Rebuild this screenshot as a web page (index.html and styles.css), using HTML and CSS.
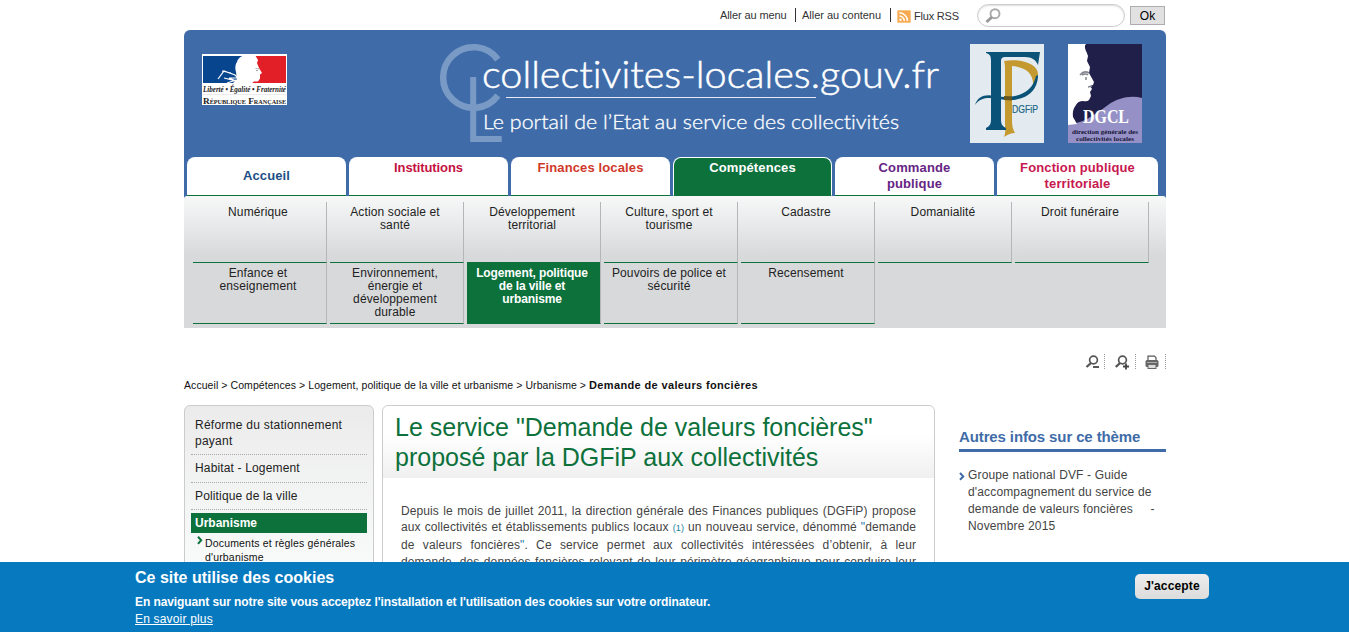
FILE: index.html
```html
<!DOCTYPE html>
<html lang="fr">
<head>
<meta charset="utf-8">
<title>Demande de valeurs foncières</title>
<link rel="stylesheet" href="styles.css">
</head>
<body>
<div class="page">
  <div class="topbar">
    <a class="top-link t1">Aller au menu</a>
    <a class="top-link t2">Aller au contenu</a>
    <a class="top-link t3"><svg class="rss" width="14" height="13" viewBox="0 0 14 13"><rect width="14" height="13" rx="2" fill="#f6a94e"/><rect x=".5" y=".5" width="13" height="12" rx="1.5" fill="none" stroke="#fbc689"/><circle cx="3.5" cy="9.8" r="1.2" fill="#fff"/><path d="M2.300 6a5 5 0 0 1 5 5M2.300 2.800a8.200 8.200 0 0 1 8.200 8.200" fill="none" stroke="#fff" stroke-width="1.500"/></svg>Flux RSS</a>
    <div class="search"><svg width="17" height="16" viewBox="0 0 17 16"><circle cx="10" cy="5.700" r="4.500" fill="#fff" stroke="#aaa" stroke-width="1.900"/><path d="M7 9l-5.500 5" stroke="#999" stroke-width="3"/></svg></div>
    <button class="ok">Ok</button>
  </div>

  <header class="header">
    <div class="banner">
      <svg class="marianne" width="85" height="51" viewBox="0 0 85 51">
        <rect width="85" height="51" fill="#fff"/>
        <rect x="1" y="2" width="40" height="27" fill="#07458f"/>
        <rect x="50" y="2" width="34" height="27" fill="#e21f26"/>
        <path d="M34 18c-1-3-1-7 1-10 1-4 5-7 10-7h8l3 5-1 3 2 5 3 5-2 1.500v4l-2 3h-4l-3 2.500H30l5-5z" fill="#fff"/>
        <path d="M16 25l6-8 11 4 3 3-9 0 7 3-12-3M20 17l9 2M25 29l9-3" fill="none" stroke="#fff" stroke-width="1.200"/>
        <path d="M53.500 14.500l4 .5M54 16.500h2" stroke="#999" stroke-width=".8"/>
        <text x="1" y="38" textLength="83" lengthAdjust="spacingAndGlyphs" class="motto">Liberté • Égalité • Fraternité</text>
        <path d="M1 40.500h83" stroke="#ddd" stroke-width=".6"/>
        <text x="1" y="49.500" textLength="83" lengthAdjust="spacingAndGlyphs" class="repub">République Française</text>
      </svg>
      <svg class="brand" width="506" height="104" viewBox="0 0 506 104">
        <path d="M59.800 17.500A30.300 30.300 0 1 0 59.800 53.500" fill="none" stroke="#7a9ac6" stroke-width="6.500"/>
        <path d="M35.200 35v62h28.500" fill="none" stroke="#7a9ac6" stroke-width="6"/>
        <text x="44" y="46" textLength="457" lengthAdjust="spacingAndGlyphs" class="brand-name">collectivites-locales.gouv.fr</text>
        <path d="M68 55.500h310" stroke="#e4ebf4" stroke-width="1"/>
        <text x="45" y="87" textLength="416" lengthAdjust="spacingAndGlyphs" class="brand-sub">Le portail de l’Etat au service des collectivités</text>
      </svg>
      <svg class="dgfip" width="74" height="99" viewBox="0 0 74 99">
        <rect width="74" height="99" fill="#e3ebf0"/>
        <path d="M34 17c16-3 34 3 34 13 0 5-2 9-5 12 1-12-7-19-21-20v55c0 5 1 9 3 12-4 0-8 2-11 4 2-5 1-9 1-14V26c0-4 0-6-1-9z" fill="#c49a30"/>
        <path d="M16 8h54l-2 13c-2-5-6-8-13-8H36c-4 0-5 1-5 5v57c0 5 1 7 5 9v2H16v-2c4-2 5-4 5-9V17c0-5-1-7-5-8z" fill="#0a5277"/>
        <path d="M5 61c3-9 10-11 20-9 18 3 37-1 41-20l2-1c0 18-15 26-31 25-13-1-24-6-32 5z" fill="#0a5277"/>
        <path d="M34 52l8 .5v4l-8-.5z" fill="#66551f"/>
        <text x="42" y="69" textLength="26" lengthAdjust="spacingAndGlyphs" class="dgfip-text">DGFiP</text>
      </svg>
      <svg class="dgcl" width="74" height="99" viewBox="0 0 74 99">
        <rect width="74" height="99" fill="#201f49"/>
        <path d="M0 80C14 80 25 72 40 61 50 54 62 51 74 54V99H0z" fill="#9590c5"/>
        <path d="M0 0h18c-3 3 1 8 2 12l-1 5 3 6-1 6 5 9-1 3-3 1 2 3-2 3 1 4-2 4q-2 2-6 1-5 0-7 4-4 5-3 12l4 7-9 1z" fill="#fff"/>
        <path d="M12 31q4-5 9-2M14 31q4-2 6 0M18 33l0 3M20 43l4-1" fill="none" stroke="#85858f" stroke-width="1.500"/>
        <text x="15" y="79" textLength="46" lengthAdjust="spacingAndGlyphs" class="dgcl-name">DGCL</text>
        <text x="4" y="90" textLength="66" lengthAdjust="spacingAndGlyphs" class="dgcl-sub">direction générale des</text>
        <text x="8" y="97" textLength="58" lengthAdjust="spacingAndGlyphs" class="dgcl-sub">collectivités locales</text>
      </svg>
    </div>
    <nav class="tabs">
      <a class="tab accueil">Accueil</a>
      <a class="tab institutions">Institutions</a>
      <a class="tab finances">Finances locales</a>
      <a class="tab active">Compétences</a>
      <a class="tab commande">Commande<br>publique</a>
      <a class="tab fonction">Fonction publique<br>territoriale</a>
    </nav>
    <nav class="submenu">
      <a class="cell">Numérique</a>
      <a class="cell">Action sociale et<br>santé</a>
      <a class="cell">Développement<br>territorial</a>
      <a class="cell">Culture, sport et<br>tourisme</a>
      <a class="cell">Cadastre</a>
      <a class="cell">Domanialité</a>
      <a class="cell">Droit funéraire</a>
      <a class="cell">Enfance et<br>enseignement</a>
      <a class="cell">Environnement,<br>énergie et<br>développement<br>durable</a>
      <a class="cell selected">Logement, politique<br>de la ville et<br>urbanisme</a>
      <a class="cell">Pouvoirs de police et<br>sécurité</a>
      <a class="cell">Recensement</a>
    </nav>
  </header>

  <div class="tools">
    <span class="tool"><svg width="15" height="15" viewBox="0 0 15 15"><circle cx="8.500" cy="6" r="3.900" fill="none" stroke="#555" stroke-width="1.700"/><path d="M6 9L1.500 13" stroke="#555" stroke-width="2.300"/><path d="M8 13h6" stroke="#444" stroke-width="1.800"/></svg></span>
    <span class="tool"><svg width="15" height="16" viewBox="0 0 15 16"><circle cx="7.500" cy="6" r="3.900" fill="none" stroke="#555" stroke-width="1.700"/><path d="M5 9L.8 13" stroke="#555" stroke-width="2.300"/><path d="M8 12.500h6M11 9.500v6" stroke="#444" stroke-width="1.800"/></svg></span>
    <span class="tool"><svg width="14" height="15" viewBox="0 0 14 15"><path d="M3 6V2.200h6.500L11 3.700V6" fill="#fff" stroke="#555" stroke-width="1.200"/><rect x=".5" y="6" width="13" height="7" rx="1.500" fill="#666"/><path d="M2 8.500h10" stroke="#aaa"/><rect x="3" y="10.500" width="8" height="4" fill="#ddd" stroke="#666"/></svg></span>
  </div>

  <div class="breadcrumb"><span>Accueil &gt; Compétences &gt; Logement, politique de la ville et urbanisme &gt; Urbanisme &gt; </span><b>Demande de valeurs foncières</b></div>

  <div class="columns">
    <aside class="side">
      <a class="side-item first">Réforme du stationnement<br>payant</a>
      <a class="side-item habitat">Habitat - Logement</a>
      <a class="side-item ville">Politique de la ville</a>
      <a class="side-active">Urbanisme</a>
      <a class="side-sub"><svg width="6" height="9" viewBox="0 0 6 9"><path d="M1 .8l3.200 3.400L1 7.800" fill="none" stroke="#0d713c" stroke-width="2"/></svg><span>Documents et règles générales<br>d'urbanisme</span></a>
    </aside>
    <main class="content">
      <h1>Le service "Demande de valeurs foncières"<br>proposé par la DGFiP aux collectivités</h1>
      <div class="text">
        <p class="line">Depuis le mois de juillet 2011, la direction générale des Finances publiques (DGFiP) propose</p>
        <p class="line">aux collectivités et établissements publics locaux <a class="note">(1)</a> un nouveau service, dénommé <span class="quote">"</span>demande</p>
        <p class="line third">de valeurs foncières<span class="quote">"</span>. Ce service permet aux collectivités intéressées d’obtenir, à leur</p>
        <p class="line">demande, des données foncières relevant de leur périmètre géographique pour conduire leur</p>
      </div>
    </main>
    <aside class="infos">
      <h2>Autres infos sur ce thème</h2>
      <div class="info-link"><svg width="6" height="9" viewBox="0 0 6 9"><path d="M1 1l3.200 3.400L1 7.800" fill="none" stroke="#3f6ca8" stroke-width="2"/></svg><span>Groupe national DVF - Guide<br>d'accompagnement du service de<br>demande de valeurs foncières &nbsp; &nbsp; -<br>Novembre 2015</span></div>
    </aside>
  </div>
</div>

<div class="cookies">
  <div class="cookie-text">
    <h3>Ce site utilise des cookies</h3>
    <p>En naviguant sur notre site vous acceptez l'installation et l'utilisation des cookies sur votre ordinateur.</p>
    <a>En savoir plus</a>
  </div>
  <button class="accept">J'accepte</button>
</div>
</body>
</html>
```
FILE: styles.css
```css
* { box-sizing: border-box; }
body {
  margin: 0;
  height: 632px;
  overflow: hidden;
  background: #fff;
  color: #222;
  font-family: "Liberation Sans", Arial, sans-serif;
  font-size: 12px;
}
h1, h2, h3, p { margin: 0; }
svg { display: block; flex: none; }
.page { width: 982px; margin-left: 184px; white-space: nowrap; }

/* top links and search */
.topbar { display: flex; height: 30px; padding-left: 536px; font-size: 11px; color: #333; }
.top-link { display: flex; height: 14px; margin-top: 8px; line-height: 14px; letter-spacing: -.1px; }
.t1 { width: 76px; border-right: 1px solid #333; }
.t2 { width: 95px; padding-left: 6px; border-right: 1px solid #333; letter-spacing: -.03px; }
.t3 { width: 86px; padding: 1px 0 0 6px; height: 16px; letter-spacing: -.2px; }
.rss { margin: 1px 3px 0 0; }
.search {
  width: 148px; height: 23px; margin-top: 4px; padding: 3px 0 0 7px;
  border: 1px solid #ccc; border-radius: 12px;
  box-shadow: inset 0 1px 2px #ddd;
}
.ok {
  width: 35px; height: 19px; margin: 6px 0 0 5px; padding: 0;
  border: 1px solid #adadad; background: #e1e1e1; color: #000;
  font: 12px/16px "Liberation Sans", Arial, sans-serif;
}

/* header */
.header { background: #3f6ca9; border-radius: 6px 6px 0 0; }
.banner { display: flex; height: 127px; }
.marianne { margin: 24px 0 0 18px; }
.brand { margin: 12px 0 0 151px; }
.dgfip { margin: 14px 0 0 26px; }
.dgcl { margin: 14px 0 0 24px; }
.motto { font: italic bold 7.5px "Liberation Serif", serif; fill: #222; }
.repub { font: bold 9px "Liberation Serif", serif; font-variant: small-caps; fill: #222; }
.brand-name { font: 300 37px Lato, sans-serif; fill: #fff; stroke: #fff; stroke-width: .5px; font-variant-ligatures: none; }
.brand-sub { font: 300 20px Lato, sans-serif; fill: #fff; stroke: #fff; stroke-width: .3px; font-variant-ligatures: none; }
.dgfip-text { font: 10px "Liberation Sans", sans-serif; fill: #1c6585; stroke: #1c6585; stroke-width: .2px; }
.dgcl-name { font: bold 18px "Liberation Serif", serif; fill: #fff; }
.dgcl-sub { font: bold 6.5px "Liberation Serif", serif; fill: #17163a; }

.tabs { display: flex; gap: 3px; height: 39px; padding-left: 3px; }
.tab {
  width: 159px; padding-top: 3px; text-align: center;
  background: #fff; border-radius: 8px 8px 0 0; border-bottom: 1px solid #0d713c;
  font-size: 13px; font-weight: bold; line-height: 16px; letter-spacing: .13px;
}
.accueil { padding-top: 11px; color: #1d4f86; }
.institutions { color: #c4113f; letter-spacing: -.1px; }
.finances { color: #d0382a; }
.tab.active { background: #0d713c; color: #fff; border: 1px solid #fff; border-bottom-color: #0d713c; padding-top: 2px; }
.commande { color: #652484; }
.fonction { width: 161px; color: #c7184f; }

.submenu {
  display: grid; grid-template-columns: repeat(7, 134px); grid-auto-rows: 61px; column-gap: 3px;
  height: 132px; padding: 6px 0 0 9px;
  background: linear-gradient(#f7f8f8, #d8d9db 60px); border-radius: 3px 3px 0 0;
}
.cell {
  padding: 4px 3px 0 0; text-align: center; line-height: 13px; letter-spacing: .13px;
  border-right: 1px solid #b4b6b8; border-bottom: 1px solid #0d713c;
}
.selected { margin-top: -1px; padding-top: 5px; background: #0d713c; color: #fff; font-weight: bold; letter-spacing: -.12px; }

.tools { display: flex; justify-content: flex-end; height: 50px; padding-top: 26px; }
.tool { width: 30px; height: 15px; padding-left: 9px; border-right: 1px dotted #999; }
.tool:first-child { width: 30px; padding-left: 10px; margin-right: 1px; }
.breadcrumb { height: 27px; font-size: 10.5px; line-height: 14px; letter-spacing: .07px; white-space: pre; color: #111; }
.breadcrumb b { font-size: 11px; letter-spacing: .36px; }

/* three columns */
.columns { display: flex; height: 250px; }
.side {
  width: 190px; padding: 11px 6px 0; border: 1px solid #ccc; border-radius: 6px 6px 0 0;
  background: linear-gradient(#ebebeb, #f8faf9 150px);
}
.side-item { display: block; padding-left: 4px; line-height: 16px; letter-spacing: .15px; border-bottom: 1px dotted #aaa; }
.first { height: 38px; letter-spacing: .24px; }
.habitat { height: 28px; padding-top: 5px; }
.ville { height: 27px; padding-top: 5px; }
.side-active { display: block; height: 20px; margin-top: 3px; padding-left: 4px; line-height: 20px; background: #0d713c; color: #fff; font-weight: bold; }
.side-sub { display: flex; gap: 2px; padding: 3px 0 0 6px; font-size: 10.5px; line-height: 14px; letter-spacing: .17px; color: #111; }
.content { width: 553px; margin-left: 8px; border: 1px solid #ccc; border-radius: 6px 6px 0 0; }
h1 {
  height: 72px; padding: 6px 0 0 12px; border-radius: 6px 6px 0 0;
  background: linear-gradient(#fff 40%, #f0f0f0);
  color: #0d713c; font-size: 25px; font-weight: normal; line-height: 30px;
}
.text { padding: 25px 18px 0; color: #444; line-height: 16px; }
.line { height: 16px; text-align: justify; text-align-last: justify; letter-spacing: .1px; }
.third { margin: 2px 0 1px; }
.note { color: #16809a; font-size: 9px; }
.quote { color: #2776a8; }

.infos { width: 207px; margin-left: 24px; }
h2 { height: 47px; padding-top: 23px; border-bottom: 3px solid #3f6ca8; color: #3f6ca8; font-size: 15px; line-height: 18px; letter-spacing: -.12px; }
.info-link { display: flex; gap: 3px; margin-top: 15px; line-height: 17px; color: #444; letter-spacing: .15px; }
.info-link svg { margin-top: 5px; }

/* consent bar */
.cookies {
  position: fixed; left: 0; right: 0; bottom: 0; height: 70px;
  display: flex; justify-content: space-between; padding: 6px 140px 0 135px;
  background: #0779bf; color: #fff;
}
h3 { font-size: 16px; line-height: 20px; }
.cookies p { margin-top: 6px; font-weight: bold; line-height: 17px; letter-spacing: -.093px; }
.cookies a { text-decoration: underline; line-height: 17px; letter-spacing: .18px; display: block; }
.accept {
  width: 74px; height: 25px; margin-top: 6px; padding: 0 0 2px; border: 0; border-radius: 5px;
  background: linear-gradient(#ededed, #dcdcdc); color: #000;
  font: bold 12px "Liberation Sans", Arial, sans-serif; letter-spacing: .15px;
}
```
